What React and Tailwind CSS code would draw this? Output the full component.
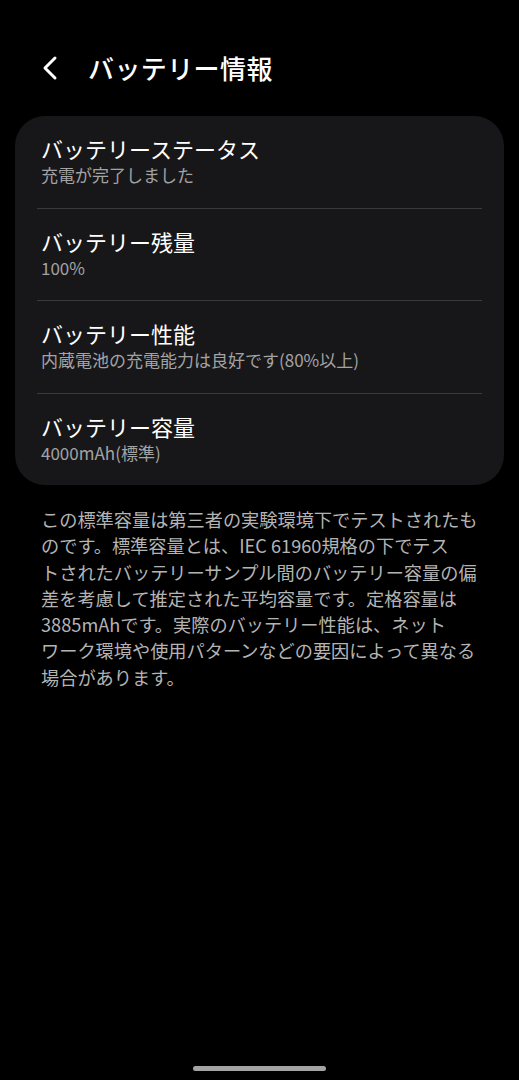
import React from 'react'

const rows = [
  { title: 'バッテリーステータス', sub: '充電が完了しました' },
  { title: 'バッテリー残量', sub: '100%' },
  { title: 'バッテリー性能', sub: '内蔵電池の充電能力は良好です(80%以上)' },
  { title: 'バッテリー容量', sub: '4000mAh(標準)' },
]

const note = [
  'この標準容量は第三者の実験環境下でテストされたも',
  'のです。標準容量とは、IEC 61960規格の下でテス',
  'トされたバッテリーサンプル間のバッテリー容量の偏',
  '差を考慮して推定された平均容量です。定格容量は',
  '3885mAhです。実際のバッテリー性能は、ネット',
  'ワーク環境や使用パターンなどの要因によって異なる',
  '場合があります。',
]

const App = () => {
  return (
    <div
      className="w-[519px] h-[1080px] bg-black text-white flex flex-col relative overflow-hidden"
      style={{ fontFamily: '"Noto Sans CJK JP", "Noto Sans", sans-serif' }}
    >
      <header className="flex items-center h-[70px] mt-[33px] pl-[40px]">
        <svg width="20" height="28" viewBox="0 0 20 28" fill="none" className="mr-[28px]">
          <path d="M15 4 L5 14 L15 24" stroke="white" strokeWidth="3" strokeLinecap="round" strokeLinejoin="round" />
        </svg>
        <h1 className="text-[26px] font-medium leading-none tracking-[0.4px]">バッテリー情報</h1>
      </header>

      <section className="mx-[15px] mt-[13px] bg-[#17171a] rounded-[30px] px-[22px]">
        {rows.map((r, i) => (
          <div key={r.title}>
            {i > 0 && <div className="h-px bg-[#3a3a3d]" />}
            <div className="h-[91.5px] flex flex-col justify-center gap-[2px] px-[4px] pb-[3px]">
              <div className="text-[22px] leading-[27px]">{r.title}</div>
              <div className="text-[17px] leading-[21px] text-[#a3a3a3]">{r.sub}</div>
            </div>
          </div>
        ))}
      </section>

      <p className="mx-[41px] mt-[21px] text-[18.2px] leading-[26.3px] text-[#b4b4b4] whitespace-nowrap">
        {note.map((l, i) => (
          <React.Fragment key={i}>
            {l}
            {i < note.length - 1 && <br />}
          </React.Fragment>
        ))}
      </p>

      <div className="absolute left-[193px] top-[1066px] w-[133px] h-[5px] rounded-full bg-[#a4a4a4]" />
    </div>
  )
}

export default App
